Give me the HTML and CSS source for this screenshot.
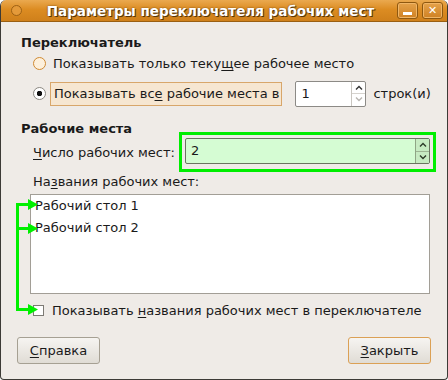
FILE: index.html
```html
<!DOCTYPE html>
<html lang="ru">
<head>
<meta charset="UTF-8" />
<title>Параметры переключателя рабочих мест</title>
<link rel="stylesheet" href="styles.css">
</head>
<body>
<div class="window">
  <div class="titlebar">
    <span class="menu-dot"></span>
    <span class="title">Параметры переключателя рабочих мест</span>
    <span class="wbtn wbtn-min"></span>
    <span class="wbtn wbtn-close">✕</span>
  </div>

  <div class="content">
    <div class="heading">Переключатель</div>
    <div class="row radio-row">
      <span class="radio radio-hover"></span>
      <span class="label">Показывать только теку<u>щ</u>ее рабочее место</span>
    </div>
    <div class="row radio-row row-two">
      <span class="radio radio-on"></span>
      <span class="label label-focus">Показывать вс<u>е</u> рабочие места в</span>
      <div class="spin spin-small">
        <span class="spin-value">1</span>
        <span class="spin-btns">
          <span class="up"><svg width="8" height="5" viewBox="0 0 8 5"><path d="M1 4.5 L4 1.5 L7 4.5" fill="none" stroke="currentColor" stroke-width="1.4"/></svg></span>
          <span class="down off"><svg width="8" height="5" viewBox="0 0 8 5"><path d="M1 0.5 L4 3.5 L7 0.5" fill="none" stroke="currentColor" stroke-width="1.4"/></svg></span>
        </span>
      </div>
      <span class="label">строк(и)</span>
    </div>

    <div class="heading heading-2">Рабочие места</div>
    <div class="row count-row">
      <span class="label"><u>Ч</u>исло рабочих мест:</span>
      <div class="highlight">
        <div class="spin spin-green">
          <span class="spin-value">2</span>
          <span class="spin-btns">
            <span class="up"><svg width="8" height="5" viewBox="0 0 8 5"><path d="M1 4.5 L4 1.5 L7 4.5" fill="none" stroke="currentColor" stroke-width="1.4"/></svg></span>
            <span class="down"><svg width="8" height="5" viewBox="0 0 8 5"><path d="M1 0.5 L4 3.5 L7 0.5" fill="none" stroke="currentColor" stroke-width="1.4"/></svg></span>
          </span>
        </div>
      </div>
    </div>
    <div class="row names-label"><span class="label">На<u>з</u>вания рабочих мест:</span></div>
    <div class="list">
      <div class="item">Рабочий стол 1</div>
      <div class="item">Рабочий стол 2</div>
    </div>
    <div class="row check-row">
      <span class="check"></span>
      <span class="label">Показывать <u>н</u>азвания рабочих мест в переключателе</span>
    </div>

    <div class="buttons">
      <button class="btn"><u>С</u>правка</button>
      <button class="btn btn-default"><u>З</u>акрыть</button>
    </div>
  </div>

  <svg class="arrows" width="40" height="120" viewBox="0 0 40 120">
    <g fill="#00f000" stroke="none">
      <rect x="15" y="8" width="3" height="108" />
      <rect x="15" y="8" width="14" height="3" />
      <rect x="15" y="32" width="14" height="3" />
      <rect x="15" y="113" width="14" height="3" />
      <polygon points="27,4 37,9.5 27,15" />
      <polygon points="27,28 37,33.5 27,39" />
      <polygon points="27,109 37,114.5 27,120" />
    </g>
  </svg>
</div>
</body>
</html>
```

FILE: styles.css
```css
* {
  box-sizing: border-box;
}
body {
  margin: 0;
  font-family: "DejaVu Sans", sans-serif;
  font-size: 13px;
  color: #1a1a1a;
}
u {
  text-decoration: underline;
  text-underline-offset: 2px;
}
.window {
  position: relative;
  width: 448px;
  height: 380px;
  background: #efebe7;
  border: 1px solid #3c3a36;
  border-top: none;
  border-radius: 6px 6px 4px 4px;
  overflow: hidden;
}
.titlebar {
  height: 22px;
  display: flex;
  align-items: center;
  background: linear-gradient(#eaa94f, #dc8c22 45%, #cf801b);
  border-bottom: 1px solid #9a5f12;
  padding: 0 4px 0 10px;
}
.menu-dot {
  width: 11px;
  height: 11px;
  border-radius: 50%;
  border: 1px solid #9d6114;
  background: #e49a3a;
}
.title {
  flex: 1;
  text-align: center;
  color: #fff;
  font-weight: bold;
  font-size: 13.5px;
  text-shadow: 1px 1px 0 #5a3608, 0 0 2px #6b4210;
  padding-left: 6px;
  white-space: nowrap;
}
.wbtn {
  width: 21px;
  height: 17px;
  margin-left: 4px;
  border: 1px solid #8e5810;
  border-radius: 3px;
  background: linear-gradient(#e5a24a, #cf8123);
  box-shadow: inset 0 0 0 1px #f0b566;
  color: #fff;
  font-size: 11px;
  font-weight: bold;
  display: flex;
  align-items: center;
  justify-content: center;
}
.wbtn-min::after {
  content: "";
  width: 9px;
  height: 3px;
  margin-top: 6px;
  background: #fff;
}
.content {
  padding: 9px 16px 0 20px;
}
.heading {
  font-weight: bold;
  height: 24px;
  line-height: 24px;
}
.heading-2 {
  margin-top: 10px;
}
.row {
  display: flex;
  align-items: center;
  white-space: nowrap;
}
.radio-row {
  height: 17px;
  padding-left: 12px;
}
.row-two {
  height: 27px;
  margin-top: 8px;
}
.radio {
  width: 13px;
  height: 13px;
  border-radius: 50%;
  margin-right: 7px;
  flex: none;
}
.radio-hover {
  border: 1px solid #d08a32;
  background: #fdf0dc;
}
.radio-on {
  border: 1px solid #8b8882;
  background: radial-gradient(circle, #111 0 2.5px, #fff 3px);
}
.label-focus {
  height: 24px;
  line-height: 22px;
  padding: 0 2px 0 3px;
  margin-left: -3px;
  background: #f6e6d1;
  border: 1px solid #d8a66a;
}
.spin {
  display: flex;
  align-items: stretch;
  border: 1px solid #8c8a86;
  border-radius: 2px;
  background: #fff;
}
.spin-small {
  width: 71px;
  height: 26px;
  margin: 0 7px 0 13px;
  flex: none;
}
.spin-value {
  flex: 1;
  padding-left: 5px;
  line-height: 24px;
}
.spin-btns {
  width: 14px;
  display: flex;
  flex-direction: column;
  border-left: 1px solid #c9c6c0;
  color: #333;
}
.spin-btns span {
  flex: 1;
  display: flex;
  align-items: center;
  justify-content: center;
}
.spin-btns .down {
  border-top: 1px solid #d6d3ce;
}
.spin-btns .off {
  color: #b8b5b0;
}
.count-row {
  height: 40px;
  margin-top: -9px;
  padding-left: 12px;
  justify-content: space-between;
  margin-right: -5px;
}
.highlight {
  width: 257px;
  height: 40px;
  border: 3px solid #00ee00;
  padding: 3px;
  margin-right: 0;
}
.spin-green {
  height: 26px;
  background: #d5fcd3;
  border-color: #6a7560;
}
.spin-green .spin-btns {
  background: #c7ebc2;
  border-left-color: #8fa585;
  color: #2c3a28;
}
.spin-green .spin-btns .down {
  border-top-color: #9db593;
}
.names-label {
  height: 18px;
  padding-left: 12px;
}
.list {
  margin: 4px 1px 0 9px;
  height: 100px;
  background: #fff;
  border: 1px solid #a29e96;
  padding: 0 0 0 4px;
}
.item {
  height: 22px;
  line-height: 22px;
}
.check-row {
  height: 17px;
  margin-top: 8px;
  padding-left: 12px;
}
.check {
  width: 11px;
  height: 11px;
  border: 1px solid #7d7a74;
  background: #fff;
  margin-right: 8px;
}
.buttons {
  display: flex;
  justify-content: space-between;
  margin: 18px 0 0 -4px;
}
.btn {
  font-family: "DejaVu Sans", sans-serif;
  font-size: 13px;
  color: #1a1a1a;
  width: 83px;
  height: 27px;
  border: 1px solid #a6a093;
  border-radius: 3px;
  background: linear-gradient(#f6f4f1, #e0dcd5);
  padding: 0;
}
.btn-default {
  border-color: #dba055;
}
.arrows {
  position: absolute;
  left: 0;
  top: 195px;
}
```
